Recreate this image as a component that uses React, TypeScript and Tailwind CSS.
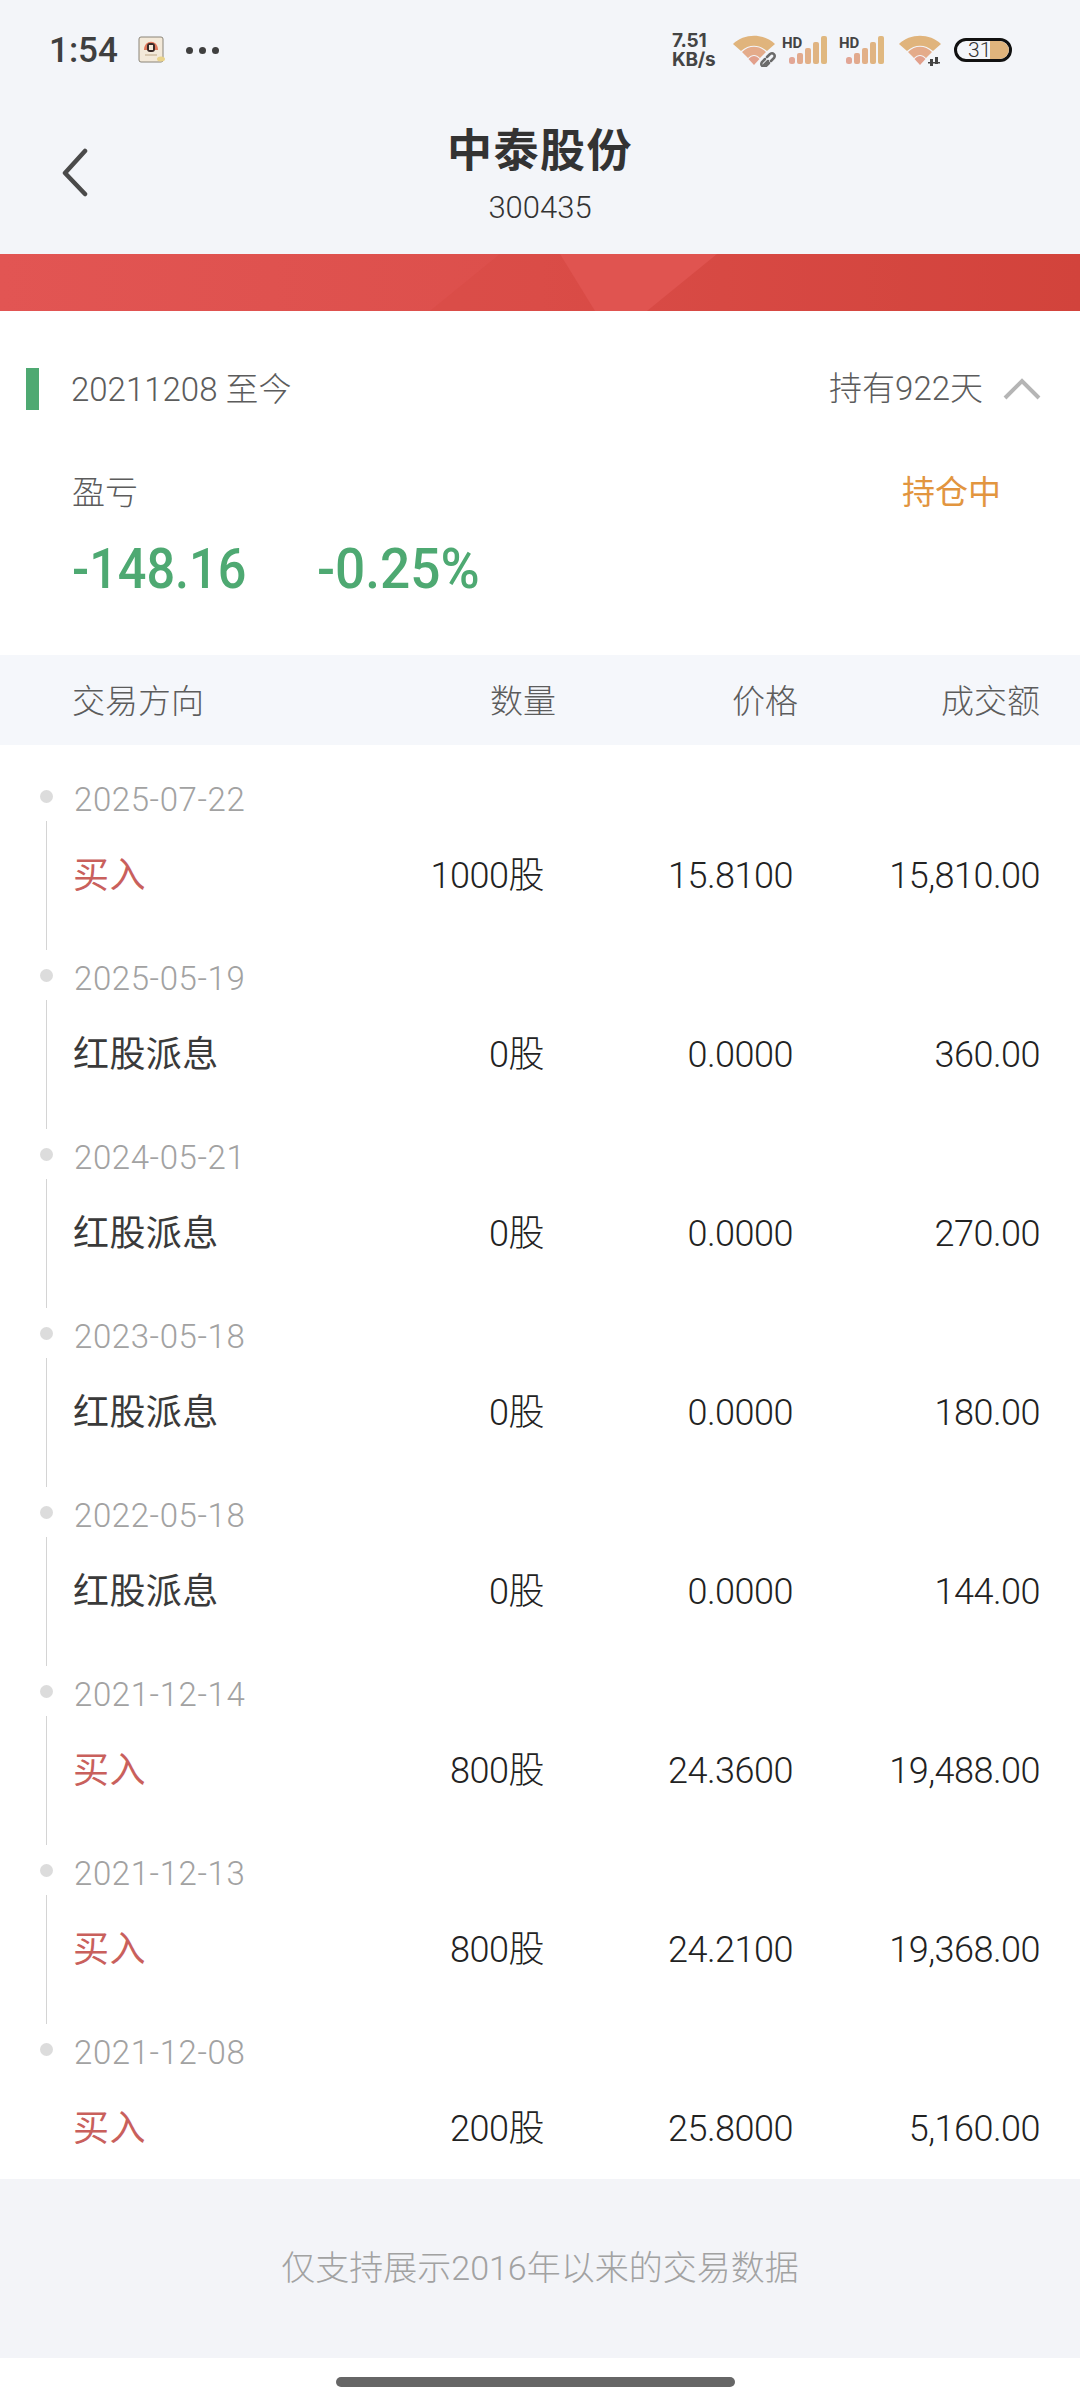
const font = { fontFamily: '"Roboto", "Noto Sans CJK SC", sans-serif' };

const trades = [
  { date: "2025-07-22", kind: "买入", qty: "1000股", price: "15.8100", amount: "15,810.00" },
  { date: "2025-05-19", kind: "红股派息", qty: "0股", price: "0.0000", amount: "360.00" },
  { date: "2024-05-21", kind: "红股派息", qty: "0股", price: "0.0000", amount: "270.00" },
  { date: "2023-05-18", kind: "红股派息", qty: "0股", price: "0.0000", amount: "180.00" },
  { date: "2022-05-18", kind: "红股派息", qty: "0股", price: "0.0000", amount: "144.00" },
  { date: "2021-12-14", kind: "买入", qty: "800股", price: "24.3600", amount: "19,488.00" },
  { date: "2021-12-13", kind: "买入", qty: "800股", price: "24.2100", amount: "19,368.00" },
  { date: "2021-12-08", kind: "买入", qty: "200股", price: "25.8000", amount: "5,160.00" },
];

function Wifi({ badge }: { badge: "link" | "arrows" }) {
  return (
    <svg width="46" height="34" viewBox="0 0 46 34" fill="none">
      <path d="M2 11C13 0 33 0 44 11L36 18C28 11 18 11 10 18Z" fill="#e0b47c" />
      <path d="M11 19C18 12 28 12 35 19L29 25C25 21 21 21 17 25Z" fill="#e4ab8a" />
      <path d="M17.500 26C21 22 25 22 28.500 26L23 32Z" fill="#e2a08c" />
      {badge === "link" ? (
        <g stroke="#6b6b6b" strokeWidth="2.500" strokeLinecap="round">
          <path d="M33 32L37 28" />
          <path d="M36 24L39 21C42 19 45 22 43 25L40 28" />
          <path d="M38 30L35 33C32 35 29 32 31 29L34 26" />
        </g>
      ) : (
        <g fill="#444">
          <path d="M33 26H36V33H33Z" />
          <path d="M38 24H41V31H38Z" />
          <path d="M31 29H43V30.500H31Z" />
        </g>
      )}
    </svg>
  );
}

function Signal() {
  return (
    <div className="relative w-[46px] h-[30px]">
      <svg className="absolute left-0 top-0" width="46" height="30" viewBox="0 0 46 30">
        <rect x="7" y="22" width="6" height="7" rx="2.500" fill="#e2a696" />
        <rect x="15" y="18" width="6" height="11" rx="2" fill="#e2aa8e" />
        <rect x="23" y="13" width="6" height="16" rx="2" fill="#e2b088" />
        <rect x="31" y="7" width="6" height="22" rx="2" fill="#e0b482" />
        <rect x="39" y="1" width="6" height="28" rx="2" fill="#e0b880" />
      </svg>
      <span className="absolute left-0 top-[2px] text-[15px] leading-[12px] font-bold text-[#444]">HD</span>
    </div>
  );
}

function StatusBar() {
  return (
    <div className="h-[100px] flex items-center justify-between pl-[49px] pr-[68px]">
      <div className="flex items-center">
        <span className="text-[35px] leading-none font-medium text-[#3f3f3f]">1:54</span>
        <svg className="ml-[20px]" width="28" height="28" viewBox="0 0 28 28">
          <rect x="1" y="1" width="24" height="25" rx="2" fill="#f3e9d9" stroke="#8a8478" strokeWidth="1" />
          <path d="M6 14C6 3 20 3 20 14Z" fill="#e0775a" />
          <rect x="9" y="7" width="8" height="9" rx="3" fill="#3a2a28" />
          <rect x="11" y="9" width="4" height="5" fill="#f3e9d9" />
          <rect x="7" y="18" width="12" height="2" fill="#d8c8b0" />
          <ellipse cx="23" cy="23" rx="4" ry="2.500" fill="#e9d28a" />
        </svg>
        <div className="ml-[20px] flex items-center gap-[6px]">
          <span className="w-[7px] h-[7px] rounded-full bg-[#3f3f3f]" />
          <span className="w-[7px] h-[7px] rounded-full bg-[#3f3f3f]" />
          <span className="w-[7px] h-[7px] rounded-full bg-[#3f3f3f]" />
        </div>
      </div>
      <div className="flex items-center">
        <div className="w-[50px] text-[19px] leading-[19px] font-bold text-[#444] tracking-[-0.2px]" style={{ fontFamily: '"Inter", sans-serif' }}>
          <div>7.51</div>
          <div>KB/s</div>
        </div>
        <div className="ml-[9px]"><Wifi badge="link" /></div>
        <div className="ml-[5px]"><Signal /></div>
        <div className="ml-[11px]"><Signal /></div>
        <div className="ml-[12px]"><Wifi badge="arrows" /></div>
        <div className="ml-[11px] relative w-[58px] h-[24px] rounded-full border-[3px] border-[#111] overflow-hidden">
          <div className="absolute right-0 top-0 bottom-0 w-[19px] bg-[#e0b47c] rounded-r-full" />
          <span className="absolute left-[11px] top-0 text-[21px] leading-[18px] font-light text-[#333]">31</span>
        </div>
      </div>
    </div>
  );
}

function Header() {
  return (
    <div className="relative h-[154px] flex flex-col items-center">
      <svg className="absolute left-[60px] top-[47px]" width="30" height="50" viewBox="0 0 30 50" fill="none">
        <path d="M25 4L5 26L25 47" stroke="#4a4a4a" strokeWidth="4.500" strokeLinecap="round" strokeLinejoin="round" />
      </svg>
      <h1 className="mt-[24px] text-[45px] leading-[56px] font-bold text-[#333] tracking-[1.500px]">中泰股份</h1>
      <p className="mt-[10px] text-[31px] leading-[36px] font-light text-[#333]">300435</p>
    </div>
  );
}

function Band() {
  return (
    <div className="relative h-[57px] bg-gradient-to-r from-[#e25553] via-[#dc4f4b] to-[#d2433c]">
      <svg className="absolute inset-0" width="1080" height="57" viewBox="0 0 1080 57" preserveAspectRatio="none">
        <polygon points="430,57 500,0 1080,0 1080,57" fill="#d2433c" opacity="0.25" />
        <polygon points="560,0 717,0 647,57 595,57" fill="#e05450" />
      </svg>
    </div>
  );
}

function Summary() {
  return (
    <div className="h-[344px] bg-white">
      <div className="pt-[56px] pr-[39px] flex items-start justify-between h-[118px]">
        <div className="flex items-center">
          <span className="ml-[26px] w-[13px] h-[42px] bg-[#4ea972]" />
          <span className="ml-[32px] pt-[2px] text-[33px] leading-[42px] font-light text-[#5c5c5c]">20211208 至今</span>
        </div>
        <div className="flex items-center h-[42px]">
          <span className="pt-[2px] text-[33px] leading-[42px] font-light text-[#5c5c5c]">持有922天</span>
          <svg className="ml-[20px] mt-[2px]" width="38" height="24" viewBox="0 0 38 24" fill="none">
            <path d="M2 21L19 4L36 21" stroke="#b5b5b5" strokeWidth="4" />
          </svg>
        </div>
      </div>
      <div className="pl-[72px] pr-[79px] flex items-center justify-between h-[50px] mt-[39px]">
        <span className="text-[33px] font-light text-[#5c5c5c]">盈亏</span>
        <span className="text-[33px] text-[#e2953f]">持仓中</span>
      </div>
      <div className="pl-[72px] flex items-center h-[64px] mt-[19px] text-[56px] font-medium text-[#4ea972]">
        <span className="w-[245px] scale-x-[0.9] origin-left">-148.16</span>
        <span className="scale-x-[0.95] origin-left">-0.25%</span>
      </div>
    </div>
  );
}

function TableHead() {
  return (
    <div className="h-[90px] bg-[#f5f7fb] pl-[72px] pr-[40px] pt-[3px] grid grid-cols-[1fr_auto_242px_242px] items-center text-[33px] font-light text-[#5c5c5c]">
      <span>交易方向</span>
      <span>数量</span>
      <span className="text-right">价格</span>
      <span className="text-right">成交额</span>
    </div>
  );
}

function TradeRow({ t, last }: { t: (typeof trades)[number]; last: boolean }) {
  return (
    <div className="relative h-[179px] pl-[73px] pr-[40px]">
      <span className="absolute left-[40px] top-[45px] w-[13px] h-[13px] rounded-full bg-[#dcdcdc]" />
      {!last && <span className="absolute left-[46px] top-[76px] h-[129px] w-[1px] bg-[#d4d4d4]" />}
      <div className="pl-[1px] pt-[35px] text-[33px] leading-[40px] tracking-[0.6px] font-light text-[#a2a2a2]">{t.date}</div>
      <div className="mt-[36px] grid grid-cols-[1fr_auto_249px_247px] items-center h-[40px] text-[36px] leading-[40px] tracking-[-0.5px] font-light text-[#222]">
        <span className={t.kind === "买入" ? "tracking-[0.4px] font-normal text-[#c9605c]" : "tracking-[0.4px] font-normal text-[#3a3a3a]"}>{t.kind}</span>
        <span>{t.qty}</span>
        <span className="text-right">{t.price}</span>
        <span className="text-right">{t.amount}</span>
      </div>
    </div>
  );
}

export default function App() {
  return (
    <div className="w-[1080px] h-[2400px] bg-white overflow-hidden" style={font}>
      <div className="bg-[#f3f5f9]">
        <StatusBar />
        <Header />
      </div>
      <Band />
      <Summary />
      <TableHead />
      <div className="h-[1434px] bg-white">
        {trades.map((t, i) => (
          <TradeRow key={t.date} t={t} last={i === trades.length - 1} />
        ))}
      </div>
      <div className="h-[179px] bg-[#f3f4f8] flex items-center justify-center text-[34px] font-light text-[#a2a2a2]">
        仅支持展示2016年以来的交易数据
      </div>
      <div className="h-[42px] pl-[336px] pt-[19px]">
        <div className="w-[399px] h-[10px] rounded-full bg-[#666]" />
      </div>
    </div>
  );
}
